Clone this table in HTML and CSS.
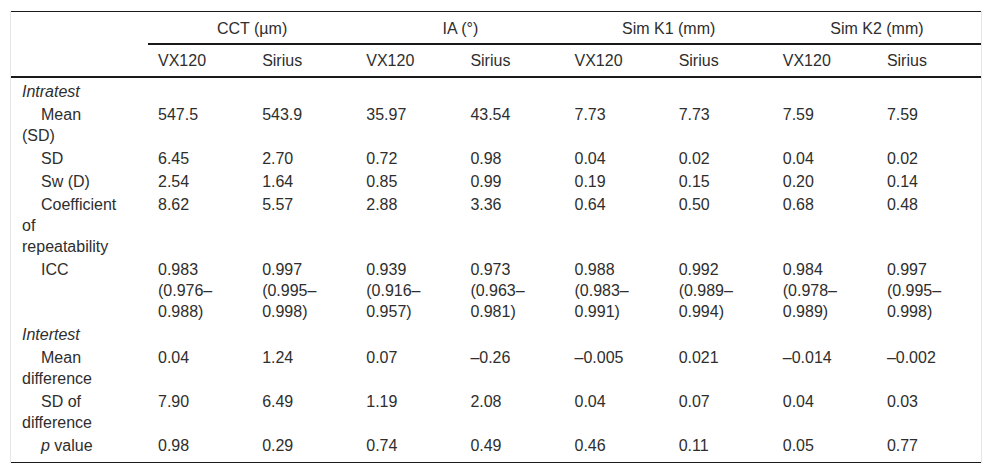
FILE: index.html
```html
<!DOCTYPE html>
<html lang="en">
<head>
<meta charset="utf-8">
<title>Repeatability table</title>
<link rel="stylesheet" href="styles.css">
</head>
<body>
<div class="wrap">
<table class="data">
  <colgroup>
    <col class="c-label">
    <col><col><col><col><col><col><col><col>
  </colgroup>
  <thead>
    <tr class="groups">
      <th class="corner" rowspan="2"></th>
      <th class="group" colspan="2">CCT (µm)</th>
      <th class="group" colspan="2">IA (°)</th>
      <th class="group" colspan="2">Sim K1 (mm)</th>
      <th class="group" colspan="2">Sim K2 (mm)</th>
    </tr>
    <tr class="devices">
      <th>VX120</th><th>Sirius</th>
      <th>VX120</th><th>Sirius</th>
      <th>VX120</th><th>Sirius</th>
      <th>VX120</th><th>Sirius</th>
    </tr>
  </thead>
  <tbody>
    <tr class="section first"><td class="label"><em>Intratest</em></td><td></td><td></td><td></td><td></td><td></td><td></td><td></td><td></td></tr>
    <tr><td class="label sub">Mean (SD)</td><td>547.5</td><td>543.9</td><td>35.97</td><td>43.54</td><td>7.73</td><td>7.73</td><td>7.59</td><td>7.59</td></tr>
    <tr><td class="label sub">SD</td><td>6.45</td><td>2.70</td><td>0.72</td><td>0.98</td><td>0.04</td><td>0.02</td><td>0.04</td><td>0.02</td></tr>
    <tr><td class="label sub">Sw (D)</td><td>2.54</td><td>1.64</td><td>0.85</td><td>0.99</td><td>0.19</td><td>0.15</td><td>0.20</td><td>0.14</td></tr>
    <tr><td class="label sub">Coefficient of repeatability</td><td>8.62</td><td>5.57</td><td>2.88</td><td>3.36</td><td>0.64</td><td>0.50</td><td>0.68</td><td>0.48</td></tr>
    <tr><td class="label sub">ICC</td><td>0.983 (0.976–0.988)</td><td>0.997 (0.995–0.998)</td><td>0.939 (0.916–0.957)</td><td>0.973 (0.963–0.981)</td><td>0.988 (0.983–0.991)</td><td>0.992 (0.989–0.994)</td><td>0.984 (0.978–0.989)</td><td>0.997 (0.995–0.998)</td></tr>
    <tr class="section"><td class="label"><em>Intertest</em></td><td></td><td></td><td></td><td></td><td></td><td></td><td></td><td></td></tr>
    <tr><td class="label sub">Mean difference</td><td>0.04</td><td>1.24</td><td>0.07</td><td>–0.26</td><td>–0.005</td><td>0.021</td><td>–0.014</td><td>–0.002</td></tr>
    <tr><td class="label sub">SD of difference</td><td>7.90</td><td>6.49</td><td>1.19</td><td>2.08</td><td>0.04</td><td>0.07</td><td>0.04</td><td>0.03</td></tr>
    <tr class="last"><td class="label sub"><em>p</em> value</td><td>0.98</td><td>0.29</td><td>0.74</td><td>0.49</td><td>0.46</td><td>0.11</td><td>0.05</td><td>0.77</td></tr>
  </tbody>
</table>
</div>
</body>
</html>
```

FILE: styles.css
```css
html, body {
  margin: 0;
  padding: 0;
  background: #ffffff;
}

body {
  font-family: "Liberation Sans", Arial, sans-serif;
  font-size: 16px;
  color: #2e2e2e;
}

.wrap {
  margin: 11px 10px 0;
  border-left: 1px solid #e6e6e6;
  border-right: 1px solid #e6e6e6;
}

.data {
  width: 100%;
  table-layout: fixed;
  border-collapse: separate;
  border-spacing: 0;
  border-top: 1px solid #1a1a1a;
  border-bottom: 1px solid #1a1a1a;
  line-height: 21px;
}

.c-label {
  width: 137px;
}

.data th {
  font-weight: normal;
  text-align: left;
  padding: 5px 10px;
  vertical-align: top;
}

.groups th {
  padding-top: 6px;
  padding-bottom: 4px;
}

.data th.group {
  text-align: center;
  border-bottom: 2px solid #1a1a1a;
}

.data th.corner {
  border-bottom: 2px solid #1a1a1a;
}

.devices th {
  border-bottom: 2px solid #1a1a1a;
}

.data td {
  padding: 1px 10px;
  vertical-align: top;
}

.data tr.first td {
  padding-top: 3px;
}

.data td.label {
  padding-left: 11px;
  padding-right: 31px;
}

.data td.sub {
  text-indent: 19px;
}

.data tr.last td {
  padding-bottom: 6px;
}
```
